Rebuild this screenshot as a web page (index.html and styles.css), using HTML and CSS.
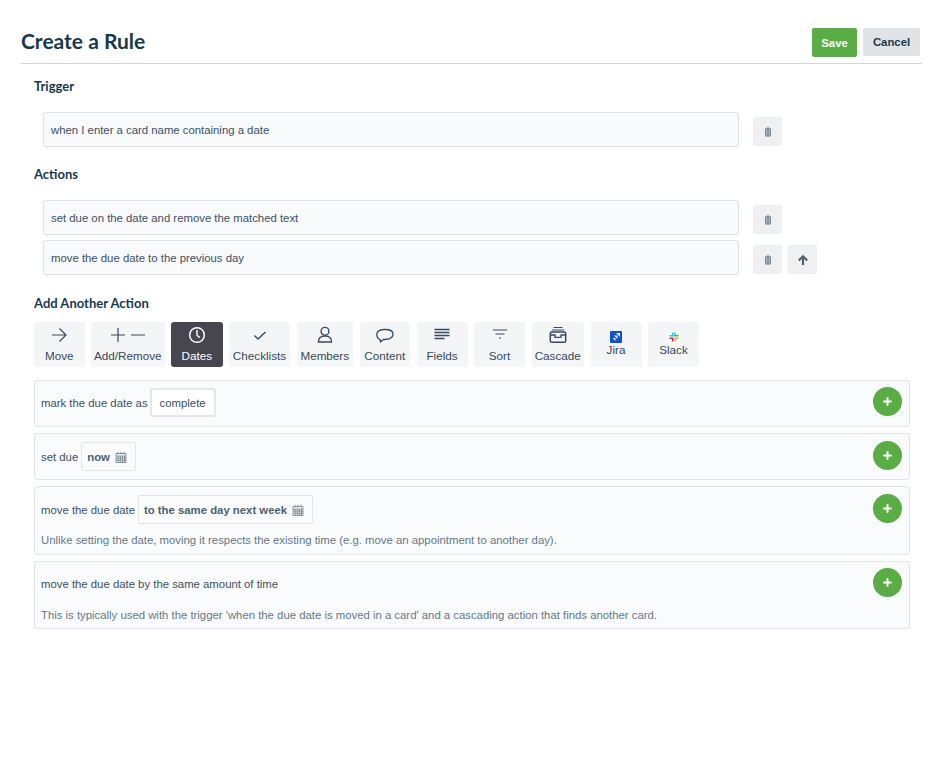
FILE: index.html
```html
<!DOCTYPE html>
<html lang="en">
<head>
<meta charset="utf-8">
<title>Create a Rule</title>
<link rel="stylesheet" href="styles.css">
</head>
<body>
<svg class="defs" width="0" height="0" aria-hidden="true">
  <symbol id="trash" viewBox="0 0 10 12"><path d="M3.4 1.5V.9c0-.3.2-.5.5-.5h2.2c.3 0 .5.2.5.5v.6H9.300v1.100H.7V1.500zM1.400 3.100h7.200v7.400c0 .7-.5 1.100-1.100 1.100h-5c-.6 0-1.100-.4-1.100-1.100zm1.300 1v6.200c0 .2.100.3.300.3h.5V4.100zm1.900 0v6.500h.8V4.100zm1.900 0v6.500H7c.2 0 .3-.1.300-.3V4.100z" fill-rule="evenodd"/></symbol>
  <symbol id="cal" viewBox="0 0 12 12"><path d="M1 2.500h10v9H1zM1 5h10M1 7.100h10M1 9.200h10M3.200 5v6.500M5.300 5v6.500M7.400 5v6.500M9.500 5v6.500M3 .8v2.500M6 .8v2.500M9 .8v2.500" fill="none" stroke="currentColor" stroke-width=".7"/></symbol>
  <symbol id="plus" viewBox="0 0 10 10"><path d="M5 1v8M1 5h8" stroke="#fff" stroke-width="2.200" stroke-linecap="round" fill="none"/></symbol>
</svg>
<main class="page">
  <header class="head">
    <h1 class="title">Create a Rule</h1>
    <div class="head-actions">
      <button class="btn btn-save">Save</button>
      <button class="btn btn-cancel">Cancel</button>
    </div>
  </header>

  <section class="sec sec-trigger">
    <h2 class="sec-title">Trigger</h2>
    <div class="rule-row">
      <div class="rule-box">when I enter a card name containing a date</div>
      <button class="sq"><svg class="ic-trash"><use href="#trash"/></svg></button>
    </div>
  </section>

  <section class="sec sec-actions">
    <h2 class="sec-title">Actions</h2>
    <div class="rule-row">
      <div class="rule-box">set due on the date and remove the matched text</div>
      <button class="sq"><svg class="ic-trash"><use href="#trash"/></svg></button>
    </div>
    <div class="rule-row">
      <div class="rule-box">move the due date to the previous day</div>
      <button class="sq"><svg class="ic-trash"><use href="#trash"/></svg></button>
      <button class="sq sq-up">
        <svg class="ic-up" viewBox="0 0 12 12"><path d="M6 11V2.500M1.800 6.500 6 2.200l4.200 4.300" fill="none" stroke="#4d6171" stroke-width="2.200"/></svg>
      </button>
    </div>
  </section>

  <section class="sec sec-add">
    <h2 class="sec-title">Add Another Action</h2>
    <nav class="tabs">
      <div class="tab t-move"><svg class="ti" viewBox="0 0 20 20"><path d="M3 10h14M10.500 3.500 17 10l-6.500 6.500" fill="none" stroke="currentColor" stroke-width="1.200"/></svg><span>Move</span></div>
      <div class="tab t-add"><svg class="ti ti-wide" viewBox="0 0 36 20"><path d="M1 10h14M8 3v14M21 10h14" fill="none" stroke="currentColor" stroke-width="1.200"/></svg><span>Add/Remove</span></div>
      <div class="tab tab-on t-dates"><svg class="ti" viewBox="0 0 20 20"><circle cx="10" cy="10" r="7.300" fill="none" stroke="currentColor" stroke-width="1.500"/><path d="M10 5v5.300l2.700 2.300" fill="none" stroke="currentColor" stroke-width="1.400"/></svg><span>Dates</span></div>
      <div class="tab t-check"><svg class="ti" viewBox="0 0 20 20"><path d="M4.500 10.500 8 14l7.500-7" fill="none" stroke="currentColor" stroke-width="1.400"/></svg><span>Checklists</span></div>
      <div class="tab t-members"><svg class="ti" viewBox="0 0 20 20"><circle cx="10" cy="6.300" r="3.900" fill="none" stroke="currentColor" stroke-width="1.400"/><path d="M3.500 17c-.3-3.500 1.700-6 6.500-6s6.800 2.500 6.500 6z" fill="none" stroke="currentColor" stroke-width="1.400"/></svg><span>Members</span></div>
      <div class="tab t-content"><svg class="ti" viewBox="0 0 20 20"><path d="M5 14.500C2.800 13.700 1.800 12 1.800 9.500 1.800 6.300 5 4.500 10 4.500s8 1.800 8 4.800-3.300 5.200-8 5.200c-.6 0-1 0-1.500-.1l-3 2.400z" fill="none" stroke="currentColor" stroke-width="1.300"/></svg><span>Content</span></div>
      <div class="tab t-fields"><svg class="ti" viewBox="0 0 20 20"><path d="M2.500 4.500h15M2.500 7.500h15M2.500 10.500h15M2.500 13.500h10" fill="none" stroke="currentColor" stroke-width="1.300"/></svg><span>Fields</span></div>
      <div class="tab t-sort"><svg class="ti" viewBox="0 0 20 20"><path d="M3 5h14M5.500 9h9M9 13h2" fill="none" stroke="currentColor" stroke-width="1.200"/></svg><span>Sort</span></div>
      <div class="tab t-cascade"><svg class="ti" viewBox="0 0 20 20"><path d="M5.500 2.500h9M3.800 5h12.400" fill="none" stroke="currentColor" stroke-width="1.100"/><rect x="2.300" y="7" width="15.400" height="10.200" rx="1.500" fill="none" stroke="currentColor" stroke-width="1.500"/><path d="M2.300 10h4.700v2.300h6V10h4.700" fill="none" stroke="currentColor" stroke-width="1.300"/></svg><span>Cascade</span></div>
      <div class="tab tab-logo t-jira"><svg class="tl" viewBox="0 0 12 12"><rect width="12" height="12" rx="1" fill="#0d52cc"/><path d="M6 2h4v4zM4 4.500h3.500V8zM2.500 7H5.500v3z" fill="#fff" opacity=".92"/></svg><span>Jira</span></div>
      <div class="tab tab-logo t-slack"><svg class="tl" viewBox="0 0 12 12"><rect width="12" height="12" fill="#fff"/><path d="M2 4.800h3M7 2v2.800" stroke="#36c5f0" stroke-width="1.600" stroke-linecap="round"/><path d="M7 4.800h3" stroke="#2eb67d" stroke-width="1.600" stroke-linecap="round"/><path d="M4.800 2v2.800" stroke="#36c5f0" stroke-width="1.600" stroke-linecap="round"/><path d="M7.200 7.200H10M7.200 7.200V10" stroke="#ecb22e" stroke-width="1.600" stroke-linecap="round"/><path d="M2 7.200h2.800V10" fill="none" stroke="#e01e5a" stroke-width="1.600" stroke-linecap="round"/></svg><span>Slack</span></div>
    </nav>

    <div class="cards">
      <article class="card card-1">
        <div class="card-line">
          <span>mark the due date as</span>
          <span class="pick pick-white">complete</span>
        </div>
        <button class="add"><svg class="ic-plus"><use href="#plus"/></svg></button>
      </article>
      <article class="card card-2">
        <div class="card-line">
          <span>set due</span>
          <span class="pick"><b>now</b><svg class="ic-cal"><use href="#cal"/></svg></span>
        </div>
        <button class="add"><svg class="ic-plus"><use href="#plus"/></svg></button>
      </article>
      <article class="card card-3">
        <div class="card-line">
          <span>move the due date</span>
          <span class="pick"><b>to the same day next week</b><svg class="ic-cal"><use href="#cal"/></svg></span>
        </div>
        <p class="note">Unlike setting the date, moving it respects the existing time (e.g. move an appointment to another day).</p>
        <button class="add"><svg class="ic-plus"><use href="#plus"/></svg></button>
      </article>
      <article class="card card-4">
        <div class="card-line">
          <span>move the due date by the same amount of time</span>
        </div>
        <p class="note">This is typically used with the trigger 'when the due date is moved in a card' and a cascading action that finds another card.</p>
        <button class="add"><svg class="ic-plus"><use href="#plus"/></svg></button>
      </article>
    </div>
  </section>
</main>
</body>
</html>
```

FILE: styles.css
```css
* { box-sizing: border-box; }
html, body { margin: 0; background: #fff; }
body {
  font-family: "Liberation Sans", Arial, sans-serif;
  font-size: 11.35px;
  color: #3b5064;
}
.defs { display: block; height: 0; }
.page { width: 927px; padding: 28px 5px 0 21px; }

.head {
  display: flex;
  justify-content: space-between;
  align-items: flex-start;
  height: 35px;
  border-bottom: 1px solid #d3d5d8;
  box-sizing: content-box;
  padding-right: 2px;
}
.title {
  margin: 0;
  font: 700 21px/26px Lato, sans-serif;
  color: #17394d;
}
.head-actions { display: flex; gap: 6px; align-items: flex-start; }
.btn {
  border: 0;
  border-radius: 2px;
  font: 700 11.35px "Liberation Sans", Arial, sans-serif;
  padding: 0;
}
.btn-save { width: 45px; height: 29px; background: #5aac44; color: #fff; }
.btn-cancel { width: 57px; height: 28px; background: #dfe3e6; color: #17394d; }

.sec { padding-left: 13px; }
.sec-title {
  margin: 0;
  font: 700 13px/18px Lato, sans-serif;
  color: #17394d;
}
.sec-trigger { padding-top: 13px; }
.sec-trigger .sec-title { margin-bottom: 17px; }
.sec-actions { padding-top: 13px; }
.sec-actions .sec-title { margin-bottom: 17px; }
.sec-add { padding-top: 14px; }
.sec-add .sec-title { margin-bottom: 10px; }

.rule-row {
  display: flex;
  align-items: flex-start;
  padding-left: 9px;
  margin-bottom: 5px;
}
.rule-box {
  width: 696px;
  height: 35px;
  line-height: 35px;
  padding-left: 7px;
  background: #f9fafc;
  border: 1px solid #dfe1e6;
  border-radius: 3px;
  color: #3b5064;
}
.sq {
  width: 29px;
  height: 29px;
  margin: 5px 0 0 14px;
  padding: 0;
  border: 0;
  border-radius: 2px;
  background: #eff0f1;
  display: flex;
  align-items: center;
  justify-content: center;
}
.sq-up { margin-left: 6px; }
.ic-trash { width: 8px; height: 10px; fill: #5e7282; }
.ic-up { width: 12px; height: 12px; }

.tabs { display: flex; gap: 6.500px; }
.tab {
  height: 45px;
  border-radius: 3px;
  background: #f4f5f6;
  display: flex;
  flex-direction: column;
  align-items: center;
  padding-top: 3px;
  color: #344a5e;
  white-space: nowrap;
  font-size: 11.700px;
}
.tab span { line-height: 14px; margin-top: 4px; }
.t-move { width: 50.500px; }
.t-add { width: 73.500px; }
.t-dates { width: 51.500px; }
.t-check { width: 61px; }
.t-members { width: 56.500px; }
.t-content { width: 50.500px; }
.t-fields { width: 51px; }
.t-sort { width: 51px; }
.t-cascade { width: 52.500px; }
.t-jira { width: 51px; }
.t-slack { width: 51px; }
.tab-on { background: #47454f; color: #fff; }
.ti { width: 20px; height: 20px; display: block; }
.ti-wide { width: 36px; }
.tab-logo { padding-top: 4px; }
.tl { width: 12px; height: 12px; margin-top: 5px; display: block; }
.tab .tl + span { margin-top: 0; }

.cards { display: flex; flex-direction: column; gap: 6px; margin-top: 13px; width: 876px; }
.card {
  position: relative;
  background: #fafbfc;
  border: 1px solid #e2e4e7;
  border-radius: 3px;
  padding: 0 6px;
}
.card-1 { height: 47px; padding-top: 7px; }
.card-2 { height: 47px; padding-top: 8px; }
.card-3 { height: 69px; padding-top: 8px; }
.card-4 { height: 68px; padding-top: 7px; }
.card-line { display: flex; align-items: center; gap: 3px; min-height: 29px; }
.card-1 .card-line { gap: 2px; }
.pick {
  display: inline-flex;
  align-items: center;
  gap: 5px;
  height: 29px;
  padding: 0 8px 0 5px;
  background: #fafbfc;
  border: 1px solid #e4e6e9;
  border-radius: 2px;
  color: #4d6171;
}
.pick b { font-weight: 700; }
.pick-white {
  background: #fff;
  border: 2px solid #e4e6e9;
  border-radius: 3px;
  padding: 0 8px;
  color: #3b5064;
}
.ic-cal { width: 12px; height: 12px; color: #5e7282; }
.note { margin: 9px 0 0; line-height: 14px; color: #63798a; }
.card-4 .note { margin-top: 10px; }
.add {
  position: absolute;
  right: 7px;
  top: 6px;
  width: 29px;
  height: 29px;
  padding: 0;
  border: 0;
  border-radius: 50%;
  background: #5aac44;
  display: flex;
  align-items: center;
  justify-content: center;
}
.card-2 .add, .card-3 .add { top: 7px; }
.ic-plus { width: 9px; height: 9px; }
```
